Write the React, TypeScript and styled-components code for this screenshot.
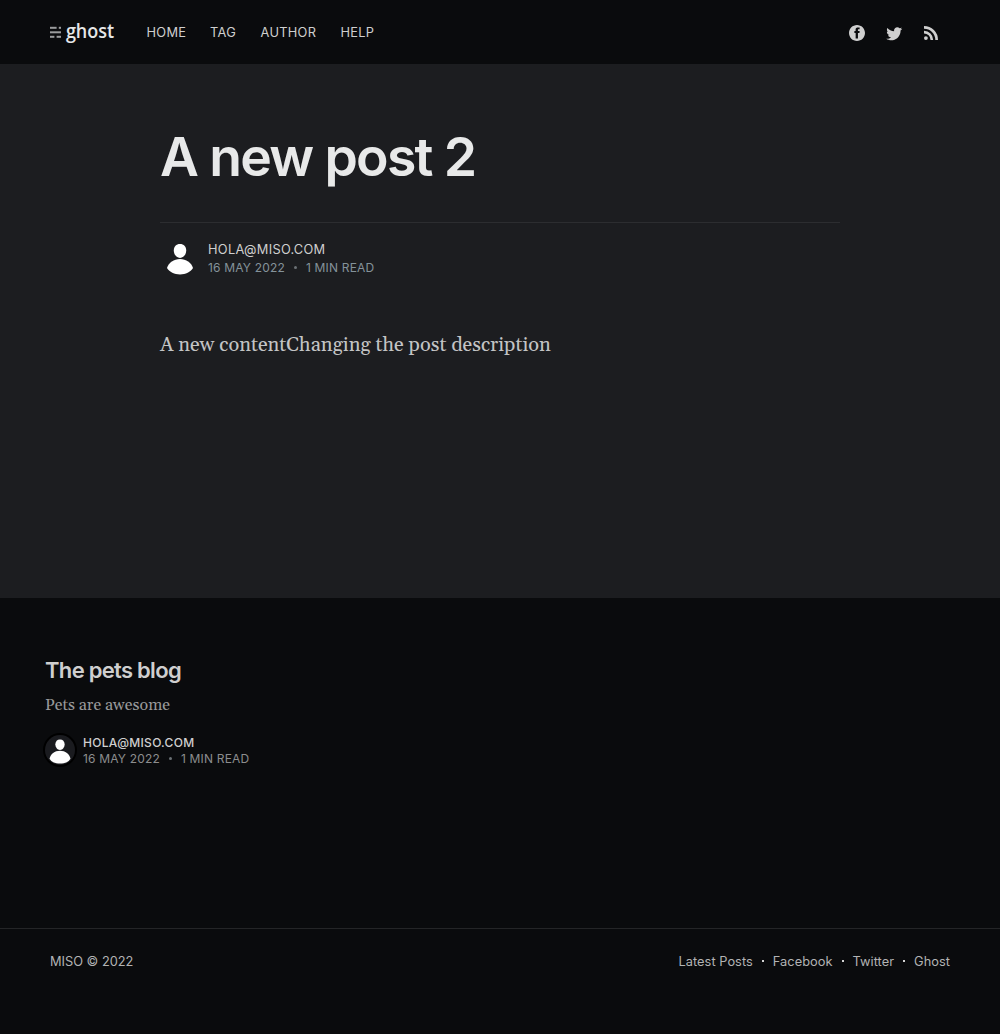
import React from "react";
import styled, { createGlobalStyle } from "styled-components";

const sans = `Inter, "Liberation Sans", sans-serif`;
const serif = `Georgia, Gelasio, "Liberation Serif", serif`;

const GlobalStyle = createGlobalStyle`
  *, *::before, *::after { box-sizing: border-box; }
  body { margin: 0; background: #0a0b0d; font-family: ${sans}; }
  h1, h2, p { margin: 0; }
  a { color: inherit; text-decoration: none; }
`;

const Page = styled.div`
  display: flex;
  flex-direction: column;
  height: 1034px;
  background: #0a0b0d;
`;

const Header = styled.header`
  display: flex;
  align-items: center;
  height: 64px;
  padding: 0 62px 0 50px;
`;

const LogoLink = styled.a`
  display: block;
  width: 80px;
  height: 34px;
  margin-right: 16.5px;
`;

const Nav = styled.nav`
  display: flex;
  flex: 1;
  gap: 24px;
  padding-top: 2px;
`;

const NavLink = styled.a<{ $width: number }>`
  width: ${(p) => p.$width}px;
  font-size: 12.8px;
  line-height: 20px;
  letter-spacing: 0.3px;
  white-space: nowrap;
  color: #cfcfcf;
`;

const Social = styled.div`
  display: flex;
  align-items: center;
  gap: 21px;
  padding-top: 2px;
`;

const SocialLink = styled.a`
  display: block;
  svg { display: block; fill: #cfcfcf; }
`;

const Main = styled.main`
  height: 534px;
  padding: 60px 160px 0;
  background: #1c1d20;
`;

const Title = styled.h1`
  height: 99px;
  border-bottom: 1px solid #2c2d30;
  font-size: 53.5px;
  line-height: 66px;
  font-weight: 600;
  letter-spacing: -1.75px;
  word-spacing: 0.3px;
  color: #e8e9e9;
`;

const Byline = styled.div<{ $small?: boolean }>`
  display: flex;
  align-items: center;
  gap: 8px;
  margin-top: ${(p) => (p.$small ? 18 : 15)}px;
`;

const Avatar = styled.div<{ $size: number; $ring?: boolean }>`
  width: ${(p) => p.$size}px;
  height: ${(p) => p.$size}px;
  border-radius: 50%;
  overflow: hidden;
  background: ${(p) => (p.$ring ? "#1a1b1f" : "transparent")};
  box-shadow: ${(p) => (p.$ring ? "0 0 0 2px #000" : "none")};
  svg { display: block; }
`;

const Meta = styled.div`
  display: flex;
  flex-direction: column;
  padding-top: 2px;
`;

const Author = styled.span<{ $small?: boolean }>`
  font-size: ${(p) => (p.$small ? 12 : 12.8)}px;
  line-height: ${(p) => (p.$small ? 16 : 18)}px;
  font-weight: ${(p) => (p.$small ? 500 : 400)};
  letter-spacing: 0.3px;
  color: #cfcfcf;
`;

const Details = styled.span<{ $small?: boolean }>`
  font-size: 12px;
  line-height: ${(p) => (p.$small ? 16 : 18)}px;
  letter-spacing: 0.18px;
  white-space: pre;
  color: ${(p) => (p.$small ? "#8c8d8e" : "#84929a")};
`;

const Bullet = styled.span`
  display: inline-block;
  width: 3px;
  height: 3px;
  margin: 0 9px;
  border-radius: 50%;
  vertical-align: 3px;
  background: #6b7175;
`;

const Body = styled.p`
  margin-top: 52px;
  font-family: ${serif};
  font-size: 20px;
  line-height: 30px;
  color: #c3c4c5;
`;

const More = styled.section`
  flex: 1;
  padding: 57px 45px 0;
`;

const CardTitle = styled.h2`
  font-size: 22px;
  line-height: 30px;
  font-weight: 600;
  letter-spacing: -0.65px;
  word-spacing: -0.3px;
  color: #cfcfcf;
`;

const Excerpt = styled.p`
  margin-top: 10px;
  font-family: ${serif};
  font-size: 16px;
  line-height: 20px;
  color: #98999a;
`;

const Footer = styled.footer`
  display: flex;
  justify-content: space-between;
  height: 106px;
  padding: 23px 50px 0;
  border-top: 1px solid #242527;
  font-size: 12.8px;
  line-height: 20px;
  color: #b2b3b4;
`;

const FooterNav = styled.nav`
  display: flex;
  align-items: center;
  height: 20px;
  letter-spacing: 0.04px;
  a + a::before {
    content: "";
    display: inline-block;
    width: 2px;
    height: 2px;
    margin: 0 9px;
    vertical-align: 4px;
    background: #d4d4d4;
  }
`;

const GhostLogo = () => (
  <svg width="80" height="34" viewBox="0 -5 80 34">
    <g fill="#9b9c9d">
      <rect x="0" y="6.8" width="6.6" height="2" />
      <rect x="8.8" y="6.8" width="2.2" height="2" />
      <rect x="0" y="11.3" width="11" height="2" />
      <rect x="0" y="15.8" width="4.4" height="2" />
      <rect x="6.6" y="15.8" width="4.4" height="2" />
    </g>
    <text
      x="15.9"
      y="17.6"
      fill="#e6e7e7"
      fontFamily={`"Open Sans", sans-serif`}
      fontWeight="650"
      fontSize="20.5"
      textLength="48.3"
      lengthAdjust="spacingAndGlyphs"
    >
      ghost
    </text>
  </svg>
);

const Person = ({ size, bust }: { size: number; bust?: boolean }) => (
  <svg width={size} height={size} viewBox="0 0 40 40" fill="#fff">
    <path d="M20 6c3.800 0 6.200 2.700 6.200 6.400 0 4-2.600 7.500-6.200 7.500s-6.200-3.500-6.200-7.500C13.800 8.700 16.200 6 20 6z" />
    {bust ? (
      <path d="M6 31.500c1.500-6.300 6.800-10.500 14-10.500s12.500 4.200 14 10.500c-2.700 4.500-7.800 6.500-14 6.500S8.700 36 6 31.500z" />
    ) : (
      <path d="M7 30c1.800-5.300 6.800-9 13-9s11.200 3.700 13 9c-2.600 4-7.300 6.400-13 6.400S9.600 34 7 30z" />
    )}
  </svg>
);

const Facebook = () => (
  <svg width="16" height="16" viewBox="0 0 32 32">
    <path d="M16 0c8.837 0 16 7.163 16 16s-7.163 16-16 16S0 24.837 0 16 7.163 0 16 0zm5.204 4.911h-3.546c-2.103 0-4.443.885-4.443 3.934.01 1.062 0 2.080 0 3.225h-2.433v3.872h2.509v11.147h4.610v-11.220h3.042l.275-3.810h-3.397s.007-1.695 0-2.187c0-1.205 1.253-1.136 1.329-1.136h2.054V4.911z" />
  </svg>
);

const Twitter = () => (
  <svg width="17" height="17" viewBox="1.500 0.5 30 30">
    <path d="M30.063 7.313c-.813 1.125-1.750 2.125-2.875 2.938v.75c0 1.563-.188 3.125-.688 4.625a15.088 15.088 0 0 1-2.063 4.438c-.875 1.438-2 2.688-3.250 3.813a15.015 15.015 0 0 1-4.625 2.563c-1.813.688-3.750 1-5.750 1-3.250 0-6.188-.875-8.875-2.625.438.063.875.125 1.375.125 2.688 0 5.063-.875 7.188-2.500-1.250 0-2.375-.375-3.375-1.125s-1.688-1.688-2.063-2.875c.438.063.813.125 1.125.125.500 0 1-.063 1.500-.250-1.313-.250-2.438-.938-3.313-1.938a5.673 5.673 0 0 1-1.313-3.688v-.063c.813.438 1.688.688 2.625.688a5.228 5.228 0 0 1-1.875-2c-.500-.875-.688-1.813-.688-2.750 0-1.063.250-2.063.750-2.938 1.438 1.750 3.188 3.188 5.250 4.250s4.313 1.688 6.688 1.813a5.579 5.579 0 0 1 1.500-5.438c1.125-1.125 2.500-1.688 4.125-1.688s3.063.625 4.188 1.813a11.480 11.480 0 0 0 3.688-1.375c-.438 1.375-1.313 2.438-2.563 3.188 1.125-.125 2.188-.438 3.313-.875z" />
  </svg>
);

const Rss = () => (
  <svg width="14" height="14" viewBox="0 0 14 14">
    <circle cx="1.900" cy="12.100" r="1.900" />
    <path d="M0 0v2.700A11.300 11.300 0 0 1 11.300 14H14A14 14 0 0 0 0 0zm0 4.800v2.650A6.550 6.550 0 0 1 6.550 14H9.200A9.200 9.200 0 0 0 0 4.800z" />
  </svg>
);

const PostDetails = ({ small }: { small?: boolean }) => (
  <Details $small={small}>
    16 MAY 2022
    <Bullet />
    1 MIN READ
  </Details>
);

export default function App() {
  return (
    <Page>
      <GlobalStyle />
      <Header>
        <LogoLink href="#">
          <GhostLogo />
        </LogoLink>
        <Nav>
          <NavLink href="#" $width={39.5}>HOME</NavLink>
          <NavLink href="#" $width={26.5}>TAG</NavLink>
          <NavLink href="#" $width={56}>AUTHOR</NavLink>
          <NavLink href="#" $width={34}>HELP</NavLink>
        </Nav>
        <Social>
          <SocialLink href="#"><Facebook /></SocialLink>
          <SocialLink href="#"><Twitter /></SocialLink>
          <SocialLink href="#"><Rss /></SocialLink>
        </Social>
      </Header>
      <Main>
        <Title>A new post 2</Title>
        <Byline>
          <Avatar $size={40}><Person size={40} /></Avatar>
          <Meta>
            <Author>HOLA@MISO.COM</Author>
            <PostDetails />
          </Meta>
        </Byline>
        <Body>A new contentChanging the post description</Body>
      </Main>
      <More>
        <CardTitle>The pets blog</CardTitle>
        <Excerpt>Pets are awesome</Excerpt>
        <Byline $small>
          <Avatar $size={30} $ring><Person size={30} bust /></Avatar>
          <Meta>
            <Author $small>HOLA@MISO.COM</Author>
            <PostDetails small />
          </Meta>
        </Byline>
      </More>
      <Footer>
        <span>MISO © 2022</span>
        <FooterNav>
          <a href="#">Latest Posts</a>
          <a href="#">Facebook</a>
          <a href="#">Twitter</a>
          <a href="#">Ghost</a>
        </FooterNav>
      </Footer>
    </Page>
  );
}
